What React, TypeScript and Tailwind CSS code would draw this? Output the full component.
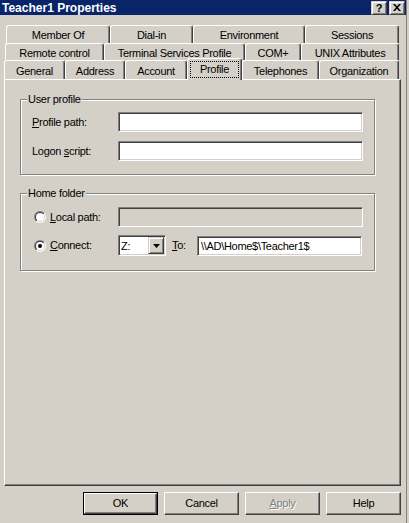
import React from "react";

const raised =
  "bg-[#d4d0c8] border border-t-white border-l-white border-r-[#404040] border-b-[#404040] shadow-[inset_-1px_-1px_0_#808080]";
const sunken =
  "border border-t-[#808080] border-l-[#808080] border-r-white border-b-white shadow-[inset_1px_1px_0_#404040,inset_-1px_-1px_0_#d4d0c8]";

function Tab({ label, w, pt }: { label: string; w: string; pt: string }) {
  return (
    <div
      className={`${w} ${pt} h-full flex items-center justify-center whitespace-nowrap bg-[#d4d0c8] border-l border-t border-r border-l-white border-t-white border-r-[#404040] rounded-t-[3px] shadow-[inset_-1px_0_0_#808080]`}
    >
      {label}
    </div>
  );
}

function Radio({ checked }: { checked?: boolean }) {
  return (
    <svg width="12" height="12" viewBox="0 0 12 12" className="shrink-0">
      <defs>
        <linearGradient id="rOuter" x1="0" y1="0" x2="1" y2="1">
          <stop offset="0.5" stopColor="#808080" />
          <stop offset="0.5" stopColor="#ffffff" />
        </linearGradient>
        <linearGradient id="rInner" x1="0" y1="0" x2="1" y2="1">
          <stop offset="0.5" stopColor="#404040" />
          <stop offset="0.5" stopColor="#d4d0c8" />
        </linearGradient>
      </defs>
      <circle cx="6" cy="6" r="6" fill="url(#rOuter)" />
      <circle cx="6" cy="6" r="5" fill="url(#rInner)" />
      <circle cx="6" cy="6" r="4" fill="#ffffff" />
      {checked && <circle cx="6" cy="6" r="2" fill="#000000" />}
    </svg>
  );
}

function Group({
  label,
  labelW,
  className,
  children,
}: {
  label: string;
  labelW: string;
  className: string;
  children: React.ReactNode;
}) {
  return (
    <div
      className={`relative w-[355px] border border-[#808080] shadow-[inset_1px_1px_0_#fff,1px_1px_0_#fff] ${className}`}
    >
      <span className={`absolute left-[6px] -top-[6px] px-[1px] bg-[#d4d0c8] ${labelW}`}>{label}</span>
      {children}
    </div>
  );
}

function Btn({ children, def }: { children: React.ReactNode; def?: boolean }) {
  if (def) {
    return (
      <div className="w-[75px] h-[23px] border border-black flex">
        <div className={`flex-1 flex items-center justify-center ${raised}`}>{children}</div>
      </div>
    );
  }
  return <div className={`w-[75px] h-[23px] flex items-center justify-center ${raised}`}>{children}</div>;
}

export default function App() {
  return (
    <div className="w-[409px] h-[523px] bg-[#d4d0c8] flex overflow-hidden font-['Liberation_Sans',Arial,sans-serif] text-[11px] tracking-[-0.3px] text-black leading-none">
      <div className="w-[406px] flex flex-col">
        {/* Title bar */}
        <div className="h-[15px] bg-[#0a246a] flex items-center pl-[2px] pr-[1px]">
          <span className="text-white font-bold text-[12px] tracking-[0px] flex-1">Teacher1 Properties</span>
          <div className="w-[16px] h-[14px] flex items-center justify-center bg-[#d4d0c8] border border-t-[#d4d0c8] border-l-[#d4d0c8] border-r-[#404040] border-b-[#404040] shadow-[inset_1px_1px_0_#fff,inset_-1px_-1px_0_#808080] font-bold text-[11px] tracking-[0px] pt-[1px]">
            ?
          </div>
          <div className="w-[2px]" />
          <div className="w-[16px] h-[14px] flex items-center justify-center bg-[#d4d0c8] border border-t-[#d4d0c8] border-l-[#d4d0c8] border-r-[#404040] border-b-[#404040] shadow-[inset_1px_1px_0_#fff,inset_-1px_-1px_0_#808080]">
            <svg width="8" height="7" viewBox="0 0 8 7">
              <path d="M0 0h2l2 2.2L6 0h2L5 3.5 8 7H6L4 4.8 2 7H0l3-3.5z" fill="#000" />
            </svg>
          </div>
        </div>

        <div className="h-[10px]" />

        {/* Tab rows */}
        <div className="h-[18px] flex ml-[6px]">
          <Tab label="Member Of" w="w-[104px]" pt="pt-[2px]" />
          <Tab label="Dial-in" w="w-[83px]" pt="pt-[2px]" />
          <Tab label="Environment" w="w-[112px]" pt="pt-[2px]" />
          <Tab label="Sessions" w="w-[94px]" pt="pt-[2px]" />
        </div>
        <div className="h-[17px] flex ml-[5px]">
          <Tab label="Remote control" w="w-[99px]" pt="pt-[2px]" />
          <Tab label="Terminal Services Profile" w="w-[141px]" pt="pt-[2px]" />
          <Tab label="COM+" w="w-[56px]" pt="pt-[2px]" />
          <Tab label="UNIX Attributes" w="w-[98px]" pt="pt-[2px]" />
        </div>
        <div className="h-[19px] flex items-start ml-[4px]">
          <Tab label="General" w="w-[61px]" pt="pt-[3px]" />
          <Tab label="Address" w="w-[60px]" pt="pt-[3px]" />
          <Tab label="Account" w="w-[62px]" pt="pt-[3px]" />
          <div className="relative z-10 -mt-[2px] w-[55px] h-[22px] flex p-[2px] bg-[#d4d0c8] border-l border-t border-r border-l-white border-t-white border-r-[#404040] rounded-t-[3px] shadow-[inset_-1px_0_0_#808080]">
            <div className="flex-1 flex items-center justify-center border border-dotted border-black">Profile</div>
          </div>
          <Tab label="Telephones" w="w-[77px]" pt="pt-[3px]" />
          <Tab label="Organization" w="w-[80px]" pt="pt-[3px]" />
        </div>

        {/* Panel */}
        <div className="ml-[4px] w-[397px] h-[407px] border border-t-white border-l-white border-r-[#404040] border-b-[#404040] shadow-[inset_-1px_-1px_0_#808080] pl-[15px] pt-[19px]">
          <Group label="User profile" labelW="" className="pl-[11px] pt-[12px] pb-[13px]">
            <div className="flex items-center h-[20px]">
              <span className="w-[86px]">
                <u>P</u>rofile path:
              </span>
              <div className={`w-[245px] h-[20px] bg-white ${sunken}`} />
            </div>
            <div className="flex items-center h-[20px] mt-[9px]">
              <span className="w-[86px]">
                Logon <u>s</u>cript:
              </span>
              <div className={`w-[245px] h-[20px] bg-white ${sunken}`} />
            </div>
          </Group>

          <Group label="Home folder" labelW="" className="mt-[18px] pl-[13px] pt-[13px] pb-[14px]">
            <div className="flex items-center h-[20px]">
              <div className="w-[84px] flex items-center">
                <Radio />
                <span className="ml-[4px]">
                  <u>L</u>ocal path:
                </span>
              </div>
              <div className={`w-[245px] h-[20px] bg-[#d4d0c8] ${sunken}`} />
            </div>
            <div className="flex items-center h-[21px] mt-[8px]">
              <div className="w-[84px] flex items-center">
                <Radio checked />
                <span className="ml-[4px]">
                  <u>C</u>onnect:
                </span>
              </div>
              <div className={`w-[48px] h-[21px] bg-white p-[1px] flex ${sunken}`}>
                <span className="flex-1 flex items-center pl-[1px] pt-[1px]">Z:</span>
                <div className="w-[16px] h-full flex items-center justify-center bg-[#d4d0c8] border border-t-[#d4d0c8] border-l-[#d4d0c8] border-r-[#404040] border-b-[#404040] shadow-[inset_1px_1px_0_#fff,inset_-1px_-1px_0_#808080]">
                  <svg width="7" height="4" viewBox="0 0 7 4">
                    <path d="M0 0h7L3.5 4z" fill="#000" />
                  </svg>
                </div>
              </div>
              <span className="ml-[6px] w-[25px]">
                <u>T</u>o:
              </span>
              <div className={`w-[165px] h-[20px] bg-white flex items-center pl-[3px] pt-[1px] ${sunken}`}>
                \\AD\Home$\Teacher1$
              </div>
            </div>
          </Group>
        </div>

        {/* Buttons */}
        <div className="mt-[6px] flex justify-end gap-[6px] pr-[5px]">
          <Btn def>OK</Btn>
          <Btn>Cancel</Btn>
          <Btn>
            <span className="text-[#808080] [text-shadow:1px_1px_0_#fff]">
              <u>A</u>pply
            </span>
          </Btn>
          <Btn>Help</Btn>
        </div>
      </div>
      <div className="w-[1px] bg-[#808080]" />
      <div className="w-[2px]" />
    </div>
  );
}
